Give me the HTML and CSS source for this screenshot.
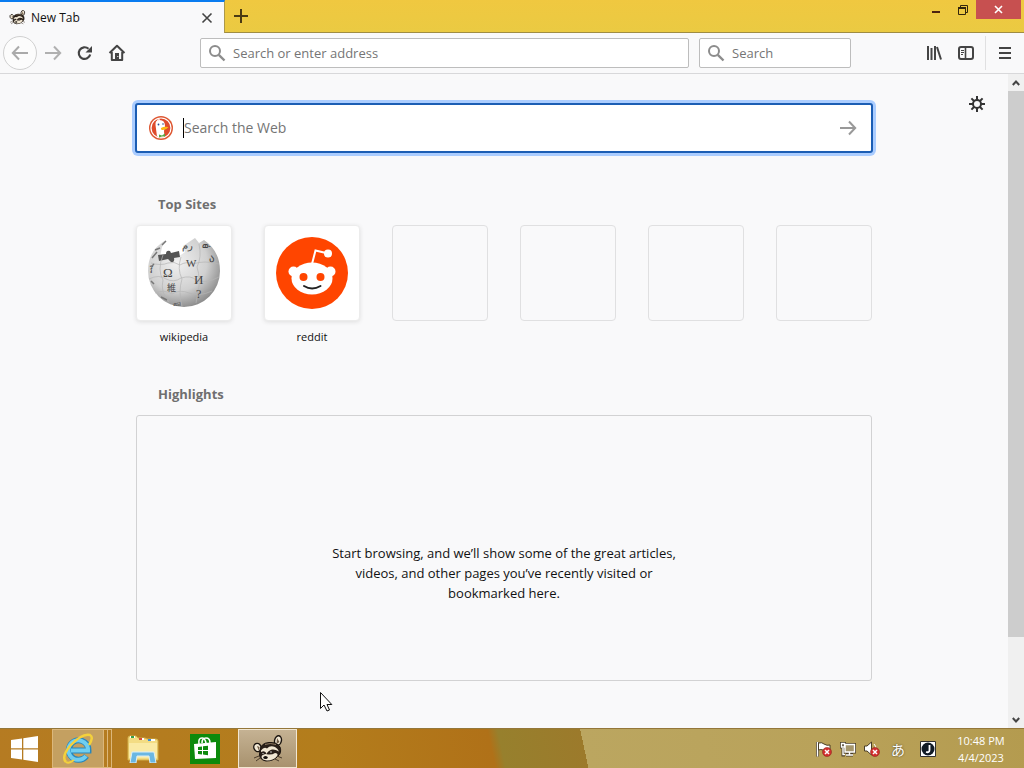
FILE: index.html
```html
<!DOCTYPE html>
<html lang="en">
<head>
<meta charset="utf-8">
<meta name="viewport" content="width=device-width, initial-scale=1">
<title>New Tab</title>
<link rel="stylesheet" href="styles.css">
</head>
<body>
<svg width="0" height="0" class="defs" aria-hidden="true">
  <defs>
    <symbol id="raccoon" viewBox="0 0 32 28">
      <ellipse cx="5.500" cy="12.500" rx="3.600" ry="4.200" transform="rotate(-25 5.500 12.500)" fill="#f2e8d4" stroke="#1b140f" stroke-width="1.400"/>
      <ellipse cx="26" cy="5.500" rx="3.400" ry="4.800" transform="rotate(12 26 5.500)" fill="#f2e8d4" stroke="#1b140f" stroke-width="1.400"/>
      <path d="M25 3 L24.500 9 L27.500 7Z M5 11 L7.500 12 L7 16Z" fill="#6d5a45"/>
      <path d="M8 15 Q9 8 17 7.500 Q25 7 28 12 Q30 18 26 21 Q22 26 14 26 Q8 25 7.500 20Z" fill="#2a2019" stroke="#1b140f"/>
      <path d="M9 15.500 Q12 11.500 15 13.500 Q18 10 23 12 Q26 13.500 27 16.500 Q23 14 20 14.500 Q16 15.500 14.500 19 Q13.500 15 9 17Z" fill="#f2e8d4"/>
      <path d="M10 20.500 Q13 18 16 19.500 Q20 20 23 18 Q26 18 25.500 20.500 Q22 25.500 15 25.500 Q10 25 9.500 22Z" fill="#f2e8d4"/>
      <path d="M13 9.500 Q18 7.500 24 9.500" fill="none" stroke="#8d7860"/>
      <ellipse cx="13.500" cy="22.500" rx="2.200" ry="1.500" fill="#120d0a"/>
      <path d="M7 21 L2 23M8 23 L4 26M25 21 L30 23M23 24 L27 26" stroke="#4a3b2b" fill="none"/>
      <circle cx="11" cy="18.500" r=".6" fill="#fff"/><circle cx="19" cy="17" r=".7" fill="#fff"/>
    </symbol>
    <symbol id="lens" viewBox="0 0 18 18">
      <circle cx="7" cy="7" r="5" fill="none" stroke="#8c8c8c" stroke-width="2"/>
      <path d="M10.800 10.800 L16.500 16.500" stroke="#8c8c8c" stroke-width="2.400"/>
    </symbol>
    <symbol id="blocked" viewBox="0 0 10 10">
      <circle cx="5" cy="5" r="4.500" fill="#d32f2f" stroke="#8e2a20" stroke-width=".6"/>
      <path d="M3 3 L7 7M7 3 L3 7" stroke="#fff" stroke-width="1.500"/>
    </symbol>
  </defs>
</svg>

<header class="tabstrip">
  <div class="tab">
    <svg class="tab-icon" width="17" height="15"><use href="#raccoon"/></svg>
    <span class="tab-title">New Tab</span>
    <button class="plain tab-close" aria-label="Close tab"><svg width="12" height="12" viewBox="0 0 12 12"><path d="M1.500 1.500 L10.500 10.500M10.500 1.500 L1.500 10.500" stroke="#444" stroke-width="1.600"/></svg></button>
  </div>
  <button class="plain new-tab" aria-label="New tab"><svg width="14" height="14" viewBox="0 0 14 14"><path d="M7 0 V14M0 7 H14" stroke="#4a3a14" stroke-width="2"/></svg></button>
  <div class="window-controls">
    <button class="plain win" aria-label="Minimize"><svg width="12" height="12" viewBox="0 0 12 12"><path d="M2 8 H10" stroke="#4c2310" stroke-width="2"/></svg></button>
    <button class="plain win" aria-label="Restore"><svg width="12" height="12" viewBox="0 0 12 12" fill="none" stroke="#33260d"><path d="M3.500 3 V1.500 H10.500 V8.500 H9"/><path d="M1.500 4 H8.500 V10.500 H1.500Z"/><path d="M1 4 H9" stroke-width="2"/></svg></button>
    <button class="plain win-close" aria-label="Close"><svg width="9" height="9" viewBox="0 0 9 9"><path d="M1 1 L8 8M8 1 L1 8" stroke="#fff" stroke-width="1.600"/></svg></button>
  </div>
</header>

<nav class="toolbar" aria-label="Navigation">
  <button class="plain back" aria-label="Back"><svg width="18" height="16" viewBox="0 0 18 16" fill="none" stroke="#aaa" stroke-width="2"><path d="M17 8 H2M8 1.500 L1.800 8 L8 14.500"/></svg></button>
  <button class="plain tool" aria-label="Forward"><svg width="18" height="16" viewBox="0 0 18 16" fill="none" stroke="#b0b0b0" stroke-width="2"><path d="M1 8 H16M10 1.500 L16.200 8 L10 14.500"/></svg></button>
  <button class="plain tool" aria-label="Reload"><svg width="16" height="16" viewBox="0 0 16 16"><path d="M13.200 9.500 A5.800 5.800 0 1 1 11.500 3.800" fill="none" stroke="#444" stroke-width="2.200"/><path d="M15 1 V7.500 H8.500Z" fill="#444"/></svg></button>
  <button class="plain tool" aria-label="Home"><svg width="18" height="18" viewBox="0 0 18 18"><path d="M1.500 9 L9 1.800 L16.500 9M3.800 8 V16 H14.200 V8" fill="none" stroke="#444" stroke-width="2" stroke-linejoin="round"/><path d="M7 9 H11 V15.500 H7Z" fill="#444"/><path d="M9.300 12 H10.300 V13 H9.300Z" fill="#fff"/></svg></button>
  <span class="spacer"></span>
  <label class="field address"><svg width="18" height="18"><use href="#lens"/></svg><input type="text" aria-label="Address" placeholder="Search or enter address"></label>
  <label class="field quick"><svg width="18" height="18"><use href="#lens"/></svg><input type="text" aria-label="Search" placeholder="Search"></label>
  <span class="spacer"></span>
  <button class="plain tool" aria-label="Library"><svg width="16" height="16" viewBox="0 0 16 16" stroke="#444" stroke-width="2"><path d="M2 1 V15M5.500 3 V15M9 1 V15M11 2 L15 14.500"/></svg></button>
  <button class="plain tool" aria-label="Sidebars"><svg width="16" height="16" viewBox="0 0 16 16" fill="none" stroke="#444"><rect x="1" y="2" width="14" height="12" rx="2" stroke-width="2"/><path d="M7.500 2 V14" stroke-width="1.600"/><path d="M3 5.500 H6M3 7.500 H6M3 9.500 H5"/></svg></button>
  <button class="plain menu" aria-label="Menu"><svg width="12" height="12" viewBox="0 0 12 12"><path d="M0 1 H12M0 6 H12M0 11 H12" stroke="#444" stroke-width="2"/></svg></button>
</nav>

<div class="viewport">
  <main class="page">
    <button class="plain settings" aria-label="Page settings"><svg width="16" height="16" viewBox="0 0 16 16"><circle cx="8" cy="8" r="4" fill="none" stroke="#333" stroke-width="2"/><path d="M8 0 V4M8 12 V16M0 8 H4M12 8 H16M2.400 2.400 L5 5M11 11 L13.600 13.600M13.600 2.400 L11 5M5 11 L2.400 13.600" stroke="#333" stroke-width="2"/></svg></button>
    <div class="column">
      <form class="search">
        <svg width="24" height="24" viewBox="0 0 24 24"><circle cx="12" cy="12" r="12" fill="#de5833"/><circle cx="12" cy="12" r="10" fill="#df4b2c" stroke="#fff" stroke-width="1.200"/><path d="M8 20.500 L6.500 9 Q6 4 10.500 4 Q16 4 16 10 L15 15 L15.500 21 Q11 22.500 8 20.500Z" fill="#fff"/><path d="M8 4.500 Q9 2.800 11 4" stroke="#fff" fill="none"/><circle cx="9.500" cy="8.500" r=".9" fill="#2d4f8e"/><circle cx="14" cy="8" r=".8" fill="#2d4f8e"/><path d="M12 12 Q15 10 19.500 11 Q18 13.500 14 14 Q11.500 14 12 12Z" fill="#fdb813"/><path d="M10 18.500 L13 19.500 L16 17.500 V20.500 L13 20.500 L10 21.500Z" fill="#55a944"/></svg>
        <span class="caret"></span>
        <input type="text" aria-label="Search the Web" placeholder="Search the Web">
        <button class="plain go" type="button" aria-label="Search"><svg width="18" height="16" viewBox="0 0 18 16" fill="none" stroke="#999" stroke-width="2"><path d="M1 8 H16M10 1.500 L16.200 8 L10 14.500"/></svg></button>
      </form>

      <section>
        <h2>Top Sites</h2>
        <div class="sites">
          <a class="site" href="#wikipedia">
            <span class="tile filled">
              <svg width="76" height="72" viewBox="0 0 76 72">
                <defs><radialGradient id="globe" cx=".4" cy=".35" r=".7"><stop offset="0" stop-color="#f1f1f1"/><stop offset=".6" stop-color="#d0d0d0"/><stop offset="1" stop-color="#858585"/></radialGradient></defs>
                <path d="M20 3 Q2 13 2 34 A36 36 0 0 0 74 34 Q74 14 58 3 L53 6 L49 1 L43 5 L37 9 L39 15 L32 20 L25 16 L14 20 L16 10Z" fill="url(#globe)"/>
                <path d="M12 18 L20 17 Q20 13 24 14 L25 16 L33 14 L34 20 L28 21 Q29 26 25 25 L22 22 L13 24Z" fill="#555"/>
                <path d="M5 26 Q15 29 22 26 Q28 24 34 28 Q40 24 47 27 Q58 23 73 27M3 42 Q13 37 20 42 Q28 46 35 41 Q45 38 50 43 Q60 47 73 40M9 56 Q18 52 26 57 Q34 52 43 56 Q53 60 66 54M17 18 Q11 33 17 43 Q14 55 23 65M35 20 Q31 32 36 42 Q32 55 36 69M53 7 Q56 20 51 30 Q55 43 52 55 L50 66" fill="none" stroke="#b5b5b5" stroke-width=".7"/>
                <g fill="#444" font-family="Liberation Serif, serif" font-size="13"><text x="17" y="40">Ω</text><text x="40" y="30" font-size="11">W</text><text x="48" y="47">И</text><text x="21" y="54" font-size="9" font-family="Noto Sans CJK JP, sans-serif">維</text><text x="63" y="25" font-size="11">ა</text><text x="50" y="61" font-size="12">?</text><text x="56" y="12" font-size="9">ው</text><text x="36" y="12" font-size="10">رم</text><text x="4" y="36" font-size="8">វិ</text><text x="27" y="69" font-size="7">வி</text></g>
                <path d="M6 21 L11 15M9 13 L14 11M16 8 L20 4M5 30 L8 27M5 44 L8 47M15 60 L21 63" stroke="#777" stroke-width="1.500"/>
              </svg>
            </span>
            <span class="label">wikipedia</span>
          </a>
          <a class="site" href="#reddit">
            <span class="tile filled">
              <svg width="72" height="72" viewBox="0 0 72 72"><circle cx="36" cy="36" r="36" fill="#ff4500"/><g fill="#fff"><circle cx="17.500" cy="34.500" r="5"/><circle cx="54.500" cy="34.500" r="5"/><ellipse cx="36" cy="41.500" rx="20.500" ry="16"/><circle cx="52" cy="16.500" r="4"/></g><path d="M36 27 L39.500 13.500 L50 16" fill="none" stroke="#fff" stroke-width="2"/><circle cx="27.500" cy="40" r="4" fill="#ff4500"/><circle cx="44.500" cy="40" r="4" fill="#ff4500"/><path d="M28 49 Q36 54 44.500 49" fill="none" stroke="#222" stroke-width="2" stroke-linecap="round"/></svg>
            </span>
            <span class="label">reddit</span>
          </a>
          <span class="tile"></span><span class="tile"></span><span class="tile"></span><span class="tile"></span>
        </div>
      </section>

      <section class="highlights">
        <h2>Highlights</h2>
        <div class="empty"><p>Start browsing, and we’ll show some of the great articles, videos, and other pages you’ve recently visited or bookmarked here.</p></div>
      </section>
    </div>
    <svg class="pointer" width="14" height="20" viewBox="0 0 14 20"><path d="M.500 .500 V16.500 L4 13 L7 19 L9.500 18 L7 12.500 H11.800Z" fill="#fff" stroke="#111"/></svg>
  </main>
  <div class="scrollbar">
    <button class="plain step" aria-label="Scroll up"><svg width="8" height="6" viewBox="0 0 8 6"><path d="M.800 5 L4 1.500 L7.200 5" fill="none" stroke="#444" stroke-width="2"/></svg></button>
    <div class="track"><div class="thumb"></div></div>
    <button class="plain step" aria-label="Scroll down"><svg width="8" height="6" viewBox="0 0 8 6"><path d="M.800 1 L4 4.500 L7.200 1" fill="none" stroke="#444" stroke-width="2"/></svg></button>
  </div>
</div>

<footer class="taskbar">
  <button class="plain start" aria-label="Start"><svg width="27" height="26" viewBox="0 0 27 26" fill="#fff"><path d="M0 4 L11 2.400 V12.300 H0ZM12.300 2.200 L27 0 V12.300 H12.300ZM0 13.600 H11 V23.500 L0 22ZM12.300 13.600 H27 V26 L12.300 23.800Z"/></svg></button>
  <div class="stack">
    <button class="plain app open" aria-label="Internet Explorer"><svg width="32" height="32" viewBox="0 0 32 32"><g fill="none"><path d="M9 17.500 H26.500 A9.800 9.800 0 1 0 24.500 23" stroke="#2787bd" stroke-width="6"/><path d="M9 17.500 H26 A9.800 9.800 0 1 0 24 23" stroke="#70cef0" stroke-width="4"/><path d="M4 29 Q-1 24 8 13 Q20 0 28 2 Q32 4 27 12" stroke="#f4d13c" stroke-width="2.500"/><path d="M4 29 Q7 31 12 27" stroke="#f4d13c" stroke-width="2"/></g></svg></button>
    <span class="edge"></span><span class="edge"></span>
  </div>
  <button class="plain app explorer" aria-label="File Explorer"><svg width="32" height="28" viewBox="0 0 32 28"><path d="M1 25 V3 Q1 1 3 1 H9 L11 3 H18 L20 4 H29 Q31 4 31 6 V25Z" fill="#f3dc83" stroke="#d2ae48"/><path d="M3 2 H8M12 4 H17M21 5 H28" stroke="#fff" stroke-width="2"/><path d="M4 2 H7" stroke="#38a149" stroke-width="2"/><path d="M12 4 H15" stroke="#d94b38" stroke-width="2"/><path d="M21 5 H24" stroke="#3c8fd4" stroke-width="2"/><path d="M2 8 H30 V23 H2Z" fill="#faeaa4"/><path d="M3 28 L5 17 H27 L29 28 H23 L22 21 H10 L9 28Z" fill="#6bb7e2" stroke="#d9effa"/></svg></button>
  <button class="plain app store" aria-label="Store"><svg width="30" height="30" viewBox="0 0 30 30"><path d="M0 0 H30 V30 H0Z" fill="#0c8a0c"/><path d="M4 10 L26 8 V24 L5 25Z" fill="#fff"/><path d="M9 10 Q8 4 12 4 Q15 4 16 9M12 9 Q12 4 16 4 Q20 4 20 9" fill="none" stroke="#fff" stroke-width="1.600"/><path d="M8 13 L12 12.500 V16 H8ZM13 12.300 L18 11.800 V16 H13ZM8 17 H12 V20.500 L8 20ZM13 17 H18 V21.200 L13 20.600Z" fill="#0c8a0c"/></svg></button>
  <button class="plain app active" aria-label="Browser"><svg width="32" height="28"><use href="#raccoon"/></svg></button>
  <div class="tray">
    <button class="plain tray-item" aria-label="Action Center"><svg width="16" height="16" viewBox="0 0 16 16"><path d="M1.500 1 V15.500" stroke="#493d25" stroke-width="3"/><path d="M1.500 1 V15.500" stroke="#fff" stroke-width="1.500"/><path d="M2.500 2 Q6 1 8 3 Q11 5 14 4 V10 Q10 11 7 9 Q5 8 2.500 9Z" fill="#fff" stroke="#493d25"/><use href="#blocked" x="6" y="6" width="10" height="10"/></svg></button>
    <button class="plain tray-item" aria-label="Network"><svg width="16" height="16" viewBox="0 0 16 16" fill="none"><path d="M5 3.500 H14.500 V11 H5ZM9.500 11 V14M6 14 H13M3 7 V14 H5M1.500 2.500 H4.500 V6 H1.500Z" stroke="#493d25" stroke-width="3"/><path d="M5 3.500 H14.500 V11 H5Z" fill="#a5966c" stroke="#fff" stroke-width="1.400"/><path d="M9.500 11 V14M6 14 H13M3 7 V13.500 H5M1.500 2.500 H4.500 V6 H1.500Z" stroke="#fff" stroke-width="1.400"/></svg></button>
    <button class="plain tray-item" aria-label="Volume"><svg width="16" height="16" viewBox="0 0 16 16"><path d="M.500 5 H3 L7.500 1 V14 L3 10 H.500Z" fill="#fff" stroke="#493d25"/><path d="M10 3 Q12 5 12 8" fill="none" stroke="#fff"/><use href="#blocked" x="6" y="6" width="10" height="10"/></svg></button>
    <button class="plain tray-item ime" lang="ja">あ</button>
    <button class="plain tray-item" aria-label="Input method"><svg width="16" height="16" viewBox="0 0 16 16"><path d="M.500 .500 H15.500 V15.500 H.500Z" fill="#fff" stroke="#30302d"/><circle cx="8" cy="8" r="6.500" fill="#111b25"/><path d="M9.500 4 V9 Q9.500 12 6 11" fill="none" stroke="#fff" stroke-width="1.800"/></svg></button>
    <div class="clock"><span>10:48 PM</span><span>4/4/2023</span></div>
  </div>
</footer>
</body>
</html>
```
FILE: styles.css
```css
* { box-sizing: border-box; }

body {
  margin: 0;
  min-height: 100vh;
  display: flex;
  flex-direction: column;
  background: #f9f9fa;
  color: #111;
  font: 12px/20px "Open Sans", "Noto Sans", sans-serif;
}

svg { display: block; flex: none; }
.defs { position: absolute; }

.plain {
  display: flex;
  align-items: center;
  justify-content: center;
  flex: none;
  margin: 0;
  padding: 0;
  border: 0;
  background: none;
  color: inherit;
  font: inherit;
}

input {
  flex: 1;
  min-width: 0;
  padding: 0;
  border: 0;
  outline: 0;
  background: none;
  color: #111;
  font: inherit;
}
input::placeholder { color: #757575; opacity: 1; }

/* Tab strip */
.tabstrip {
  display: flex;
  height: 33px;
  background: linear-gradient(#f0c840, #eaca42);
}
.tab {
  display: flex;
  align-items: center;
  width: 225px;
  padding: 0 11px 0 9px;
  border-top: 2px solid #0a7cf0;
  border-right: 1px solid #ab984c;
  background: #f9f9fa;
}
.tab-title { flex: 1; margin-left: 5px; }
.tab-close { width: 12px; height: 20px; }
.new-tab {
  width: 32px;
  border-bottom: 1px solid #9f8c42;
}
.window-controls {
  flex: 1;
  display: flex;
  justify-content: flex-end;
  align-items: flex-start;
  padding-right: 3px;
  border-bottom: 1px solid #9f8c42;
}
.win { width: 27px; height: 20px; }
.win-close {
  width: 45px;
  height: 19px;
  background: #c75050;
}

/* Navigation toolbar */
.toolbar {
  display: flex;
  align-items: center;
  height: 41px;
  padding: 0 0 0 3px;
  border-bottom: 1px solid #d8d8da;
}
.back {
  width: 34px;
  height: 34px;
  border: 1px solid #d0d0d0;
  border-radius: 50%;
  background: #fcfcfc;
}
.tool { width: 32px; height: 32px; }
.spacer { flex: 67 0 0; }
.field {
  display: flex;
  align-items: center;
  gap: 7px;
  height: 30px;
  padding: 0 7px;
  border: 1px solid #bdbdbd;
  border-radius: 2px;
  background: #fff;
  font-size: 13px;
}
.address { flex: 473 0 0; margin-right: 10px; }
.quick { flex: none; width: 152px; }
.menu {
  width: 39px;
  height: 34px;
  margin-left: 3px;
  border-left: 1px solid #e0e0e1;
}

/* New tab page */
.viewport { flex: 1; display: flex; }
.page {
  flex: 1;
  position: relative;
  padding: 29px 24px 47px;
}
.settings {
  position: absolute;
  top: 22px;
  right: 23px;
}
.column { max-width: 736px; margin: 0 auto; }
.search {
  display: flex;
  align-items: center;
  height: 50px;
  margin: 0 -1px 41px;
  padding: 0 14px 0 12px;
  border: 2px solid #1c5eb4;
  border-radius: 3px;
  background: #fff;
  box-shadow: 0 0 0 3px #abcdff;
  font-size: 14px;
}
.caret {
  width: 1px;
  height: 20px;
  margin-left: 10px;
  background: #000;
}
h2 {
  margin: 0 0 11px;
  padding-left: 22px;
  color: #6f6f6f;
  font-size: 13px;
  line-height: 20px;
}
.sites {
  display: grid;
  grid-template-columns: repeat(auto-fill, 96px);
  gap: 32px;
}
.site {
  color: inherit;
  text-align: center;
  text-decoration: none;
}
.tile {
  display: flex;
  align-items: center;
  justify-content: center;
  height: 96px;
  border: 1px solid #e0e0e1;
  border-radius: 4px;
}
.filled {
  background: #fff;
  border-color: #ececec;
  box-shadow: 0 1px 4px #dedede;
}
.label { display: block; margin-top: 6px; font-size: 11px; }
.highlights { margin-top: 37px; }
.empty {
  display: flex;
  justify-content: center;
  align-items: center;
  min-height: 266px;
  padding-top: 50px;
  border: 1px solid #d2d2d3;
  border-radius: 3px;
}
.empty p {
  max-width: 350px;
  margin: 0;
  font-size: 13px;
  text-align: center;
}
.pointer {
  position: absolute;
  left: 320px;
  bottom: 16px;
}

/* Scrollbar */
.scrollbar {
  display: flex;
  flex-direction: column;
  width: 16px;
  background: #f0f0f0;
}
.step { height: 17px; }
.track { flex: 1; }
.thumb { height: 88%; background: #cdcdcd; }

/* Taskbar */
.taskbar {
  display: flex;
  align-items: stretch;
  height: 40px;
  border-top: 1px solid #94773a;
  background: linear-gradient(78deg, #b57b22 0, #b37d1c 32%, #b07118 48%, #97802d 49%, #9c7a2b 57%, #bba660 57%, #b9a25a 80%, #b49b4f 100%);
  color: #fff;
}
.start { width: 49px; }
.stack { display: flex; margin-left: 3px; }
.open {
  width: 52px;
  border: 1px solid #dcb77a;
  background: #c4a061;
}
.edge {
  width: 4px;
  border: 1px solid #dcb77a;
  border-left: 0;
}
.explorer { width: 62px; }
.store { width: 62px; }
.active {
  width: 59px;
  margin-left: 2px;
  border: 1px solid #f2e7d2;
  background: linear-gradient(#c5b293, #a8926e);
}
.tray {
  flex: 1;
  display: flex;
  align-items: center;
  justify-content: flex-end;
  padding-right: 16px;
}
.tray-item { width: 24px; height: 24px; }
.ime {
  width: 28px;
  font: 14px/20px "Noto Sans CJK JP", sans-serif;
  text-shadow: 0 0 2px #3a321e;
}
.ime + .tray-item { width: 32px; }
.clock {
  display: flex;
  flex-direction: column;
  align-items: center;
  min-width: 54px;
  margin-left: 10px;
  font-size: 11px;
  line-height: 17px;
}
```
